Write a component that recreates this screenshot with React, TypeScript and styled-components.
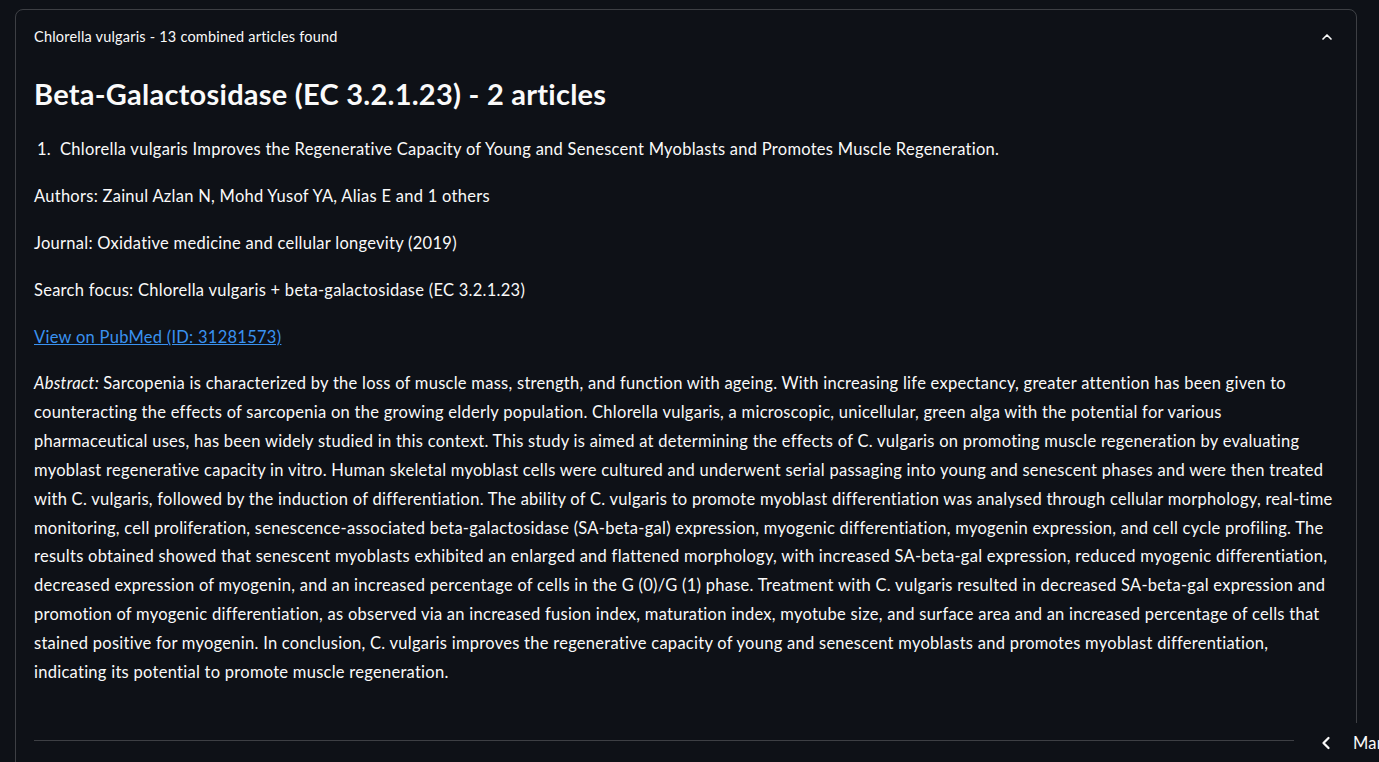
import React from 'react';
import styled, { createGlobalStyle } from 'styled-components';
import { ChevronUp, ChevronLeft } from 'lucide-react';

const GlobalStyle = createGlobalStyle`
  html, body {
    margin: 0;
    padding: 0;
    background: #0e1117;
    color: #fafafa;
    font-family: Lato, "Noto Sans", sans-serif;
    overflow: hidden;
  }
`;

const Page = styled.main`
  padding: 9px 22px 0 15px;
  height: 762px;
  box-sizing: border-box;
`;

const Expander = styled.section`
  border: 1px solid rgba(250, 250, 250, 0.2);
  border-radius: 8px;
  height: 900px;
`;

const Header = styled.div`
  display: flex;
  align-items: center;
  justify-content: space-between;
  padding: 16px 21px 16px 18px;
  font-size: 14.5px;
  letter-spacing: 0.2px;
  line-height: 22px;
`;

const Toggle = styled.span`
  display: flex;
  width: 16px;
  height: 16px;
  align-items: center;
  justify-content: center;
`;

const Body = styled.div`
  padding: 0 18px;
  font-size: 16.5px;
  letter-spacing: 0.27px;
`;

const Heading = styled.h3`
  margin: 13px 0 0;
  font-size: 29px;
  letter-spacing: 0.25px;
  line-height: 34px;
  font-weight: 700;
`;

const List = styled.ol`
  margin: 25px 0 0;
  padding: 0;
  list-style: none;
  line-height: 26px;
`;

const Item = styled.li`
  display: flex;
`;

const Num = styled.span`
  width: 26px;
  padding-left: 3px;
  box-sizing: border-box;
  flex-shrink: 0;
`;

const Para = styled.p`
  margin: 21px 0 0;
  line-height: 26px;
`;

const Link = styled.a`
  color: #3a92f0;
  text-decoration: underline;
`;

const Abstract = styled.div`
  margin-top: 19px;
  line-height: 28.9px;
`;

const Line = styled.span`
  display: block;
  white-space: nowrap;
`;

const Rule = styled.hr`
  margin: 53px 0 0;
  border: none;
  border-top: 1px solid rgba(250, 250, 250, 0.2);
`;

const Manage = styled.div`
  position: fixed;
  right: 0;
  bottom: 0;
  width: 85px;
  height: 39px;
  background: #0e1117;
  display: flex;
  align-items: center;
  gap: 17px;
  padding-left: 22px;
  box-sizing: border-box;
  overflow: hidden;
  white-space: nowrap;
  font-size: 16.5px;
  letter-spacing: 0.27px;

  svg {
    flex-shrink: 0;
  }
`;

const abstractLines = [
  'Sarcopenia is characterized by the loss of muscle mass, strength, and function with ageing. With increasing life expectancy, greater attention has been given to',
  'counteracting the effects of sarcopenia on the growing elderly population. Chlorella vulgaris, a microscopic, unicellular, green alga with the potential for various',
  'pharmaceutical uses, has been widely studied in this context. This study is aimed at determining the effects of C. vulgaris on promoting muscle regeneration by evaluating',
  'myoblast regenerative capacity in vitro. Human skeletal myoblast cells were cultured and underwent serial passaging into young and senescent phases and were then treated',
  'with C. vulgaris, followed by the induction of differentiation. The ability of C. vulgaris to promote myoblast differentiation was analysed through cellular morphology, real-time',
  'monitoring, cell proliferation, senescence-associated beta-galactosidase (SA-beta-gal) expression, myogenic differentiation, myogenin expression, and cell cycle profiling. The',
  'results obtained showed that senescent myoblasts exhibited an enlarged and flattened morphology, with increased SA-beta-gal expression, reduced myogenic differentiation,',
  'decreased expression of myogenin, and an increased percentage of cells in the G (0)/G (1) phase. Treatment with C. vulgaris resulted in decreased SA-beta-gal expression and',
  'promotion of myogenic differentiation, as observed via an increased fusion index, maturation index, myotube size, and surface area and an increased percentage of cells that',
  'stained positive for myogenin. In conclusion, C. vulgaris improves the regenerative capacity of young and senescent myoblasts and promotes myoblast differentiation,',
  'indicating its potential to promote muscle regeneration.',
];

const App: React.FC = () => {
  return (
    <>
      <GlobalStyle />
      <Page>
        <Expander>
          <Header>
            <span>Chlorella vulgaris - 13 combined articles found</span>
            <Toggle>
              <ChevronUp size={20} strokeWidth={2.5} />
            </Toggle>
          </Header>
          <Body>
            <Heading>Beta-Galactosidase (EC 3.2.1.23) - 2 articles</Heading>
            <List>
              <Item>
                <Num>1.</Num>
                <span>
                  Chlorella vulgaris Improves the Regenerative Capacity of Young and Senescent Myoblasts and Promotes
                  Muscle Regeneration.
                </span>
              </Item>
            </List>
            <Para>Authors: Zainul Azlan N, Mohd Yusof YA, Alias E and 1 others</Para>
            <Para>Journal: Oxidative medicine and cellular longevity (2019)</Para>
            <Para>Search focus: Chlorella vulgaris + beta-galactosidase (EC 3.2.1.23)</Para>
            <Para>
              <Link href="#">View on PubMed (ID: 31281573)</Link>
            </Para>
            <Abstract>
              {abstractLines.map((text, i) => (
                <Line key={i}>
                  {i === 0 && <em>Abstract: </em>}
                  {text}
                </Line>
              ))}
            </Abstract>
            <Rule />
          </Body>
        </Expander>
      </Page>
      <Manage>
        <ChevronLeft size={20} strokeWidth={2.75} />
        <span>Manage app</span>
      </Manage>
    </>
  );
};

export default App;
